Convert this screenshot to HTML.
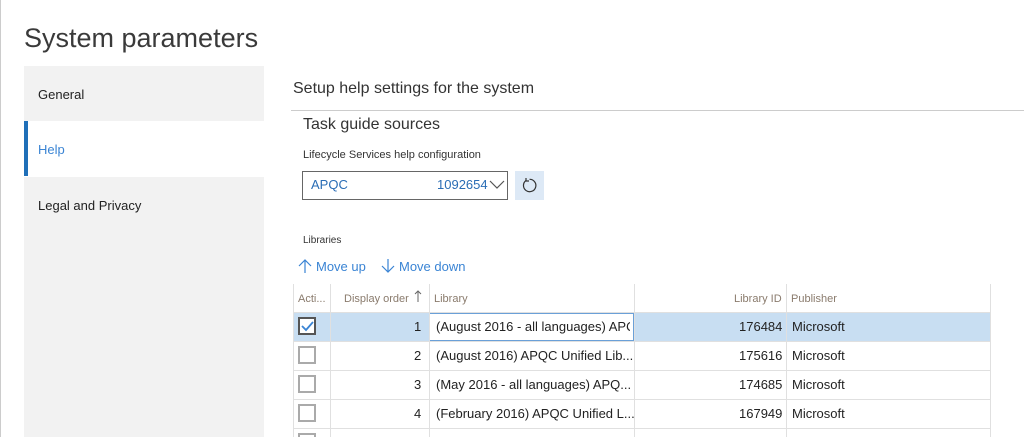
<!DOCTYPE html>
<html style="overflow:hidden"><head><style>
*{margin:0;padding:0;box-sizing:border-box}
html,body{width:1024px;height:437px;overflow:hidden}
body{background:#fff;font-family:"Segoe UI","Liberation Sans",sans-serif;color:#222;position:relative}
.a{position:absolute;white-space:nowrap}
.nav{position:absolute;left:24px;width:240px;height:55px;background:#f2f2f2;font-size:13px;padding:21px 0 0 14px}
.hd{font-size:11px;color:#8a7b6d}
.c{font-size:13px}
.vl{position:absolute;width:1px;background:#e0e0e0;top:284px;height:153px}
.hl{position:absolute;left:293px;width:697px;height:1px;background:#e0e0e0}
.cb{position:absolute;left:298px;width:18px;height:18px;border:2px solid #aaa;background:#fff}
</style></head><body>
<div class="a" style="left:0;top:0;width:1px;height:437px;background:#ccc"></div>
<div class="a" style="left:24px;top:23px;font-size:27px;color:#3a3a3a">System parameters</div>
<div class="nav" style="top:66px">General</div>
<div class="nav" style="top:121px;background:#fff;color:#3a84d4;border-left:4px solid #1f6fb8;padding-left:10px">Help</div>
<div class="nav" style="top:177px">Legal and Privacy</div>
<div class="nav" style="top:232px;height:205px"></div>
<div class="a" style="left:293px;top:80px;font-size:16px;color:#333">Setup help settings for the system</div>
<div class="a" style="left:291px;top:110px;width:733px;height:1px;background:#ccc"></div>
<div class="a" style="left:303px;top:116px;font-size:16px;color:#333">Task guide sources</div>
<div class="a" style="left:303px;top:149px;font-size:11px;color:#333">Lifecycle Services help configuration</div>
<div class="a" style="left:302px;top:171px;width:206px;height:29px;border:1px solid #666"></div>
<div class="a c" style="left:311px;top:177px;color:#2a6db5">APQC</div>
<div class="a c" style="left:437px;top:177px;color:#2a6db5">1092654</div>
<svg class="a" style="left:489px;top:180px" width="16" height="10"><path d="M1 1 L8 8 L15 1" stroke="#555" fill="none" stroke-width="1.2"/></svg>
<div class="a" style="left:515px;top:171px;width:29px;height:29px;background:#dde9f6"></div>
<svg class="a" style="left:521px;top:177px" width="17" height="17"><path d="M5 3.5 A6.2 6.2 0 1 0 8.5 2.3" stroke="#333" fill="none" stroke-width="1.2"/><path d="M5 1 L5 4 L8 4" stroke="#333" fill="none" stroke-width="1.2"/></svg>
<div class="a" style="left:303px;top:235px;font-size:10px;color:#333">Libraries</div>
<svg class="a" style="left:298px;top:258px" width="14" height="16"><path d="M7 15 V2 M1 8 L7 2 L13 8" stroke="#3a84d4" fill="none" stroke-width="1.2"/></svg>
<div class="a c" style="left:316px;top:259px;color:#3a84d4">Move up</div>
<svg class="a" style="left:381px;top:258px" width="14" height="16"><path d="M7 1 V14 M1 8 L7 14 L13 8" stroke="#3a84d4" fill="none" stroke-width="1.2"/></svg>
<div class="a c" style="left:399px;top:259px;color:#3a84d4">Move down</div>
<div class="a" style="left:293px;top:312px;width:697px;height:29px;background:#c8def2"></div>
<div class="a" style="left:429px;top:313px;width:205px;height:28px;border:1px solid #6aa0d8;background:#fff"></div>
<div class="vl" style="left:293px"></div><div class="vl" style="left:330px"></div><div class="vl" style="left:429px"></div><div class="vl" style="left:634px"></div><div class="vl" style="left:786px"></div><div class="vl" style="left:990px"></div>
<div class="hl" style="top:312px"></div><div class="hl" style="top:341px"></div><div class="hl" style="top:370px"></div><div class="hl" style="top:399px"></div><div class="hl" style="top:428px"></div>
<div class="a hd" style="left:298px;top:293px">Acti...</div>
<div class="a hd" style="left:344px;top:293px">Display order</div>
<svg class="a" style="left:414px;top:290px" width="8" height="13"><path d="M4 12 V1 M1 4 L4 1 L7 4" stroke="#666" fill="none"/></svg>
<div class="a hd" style="left:434px;top:293px">Library</div>
<div class="a hd" style="left:734px;top:293px">Library ID</div>
<div class="a hd" style="left:791px;top:293px">Publisher</div>
<div class="cb" style="top:317px;border-color:#555"></div>
<svg class="a" style="left:301px;top:320px" width="13" height="12"><path d="M1 6 L5 10 L12 2" stroke="#3a84d4" fill="none" stroke-width="1.8"/></svg>
<div class="cb" style="top:346px"></div><div class="cb" style="top:375px"></div><div class="cb" style="top:404px"></div><div class="cb" style="top:433px"></div>
<div class="a c" style="left:414px;top:319px">1</div><div class="a c" style="left:414px;top:348px">2</div><div class="a c" style="left:414px;top:377px">3</div><div class="a c" style="left:414px;top:406px">4</div>
<div class="a c" style="left:436px;top:319px;width:194px;overflow:hidden">(August 2016 - all languages) APQC</div>
<div class="a c" style="left:436px;top:348px">(August 2016) APQC Unified Lib...</div>
<div class="a c" style="left:436px;top:377px">(May 2016 - all languages) APQ...</div>
<div class="a c" style="left:436px;top:406px">(February 2016) APQC Unified L...</div>
<div class="a c" style="left:739px;top:319px">176484</div><div class="a c" style="left:739px;top:348px">175616</div><div class="a c" style="left:739px;top:377px">174685</div><div class="a c" style="left:739px;top:406px">167949</div>
<div class="a c" style="left:792px;top:319px">Microsoft</div><div class="a c" style="left:792px;top:348px">Microsoft</div><div class="a c" style="left:792px;top:377px">Microsoft</div><div class="a c" style="left:792px;top:406px">Microsoft</div>
</body></html>
